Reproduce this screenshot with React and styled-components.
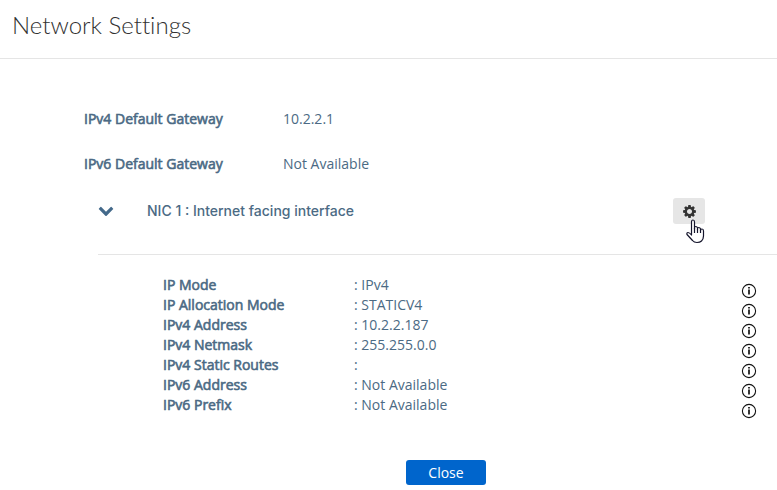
import { useState } from "react";
import styled, { createGlobalStyle } from "styled-components";

const GlobalStyle = createGlobalStyle`
  * {
    box-sizing: border-box;
  }

  body {
    margin: 0;
    background: #fff;
    color: #4b6a84;
    font-family: "Open Sans", "Noto Sans", sans-serif;
    font-size: 14px;
    line-height: 20px;
  }

  button {
    border: 0;
    font: inherit;
    cursor: pointer;
  }
`;

const Header = styled.header`
  padding: 9px 12px 17px;
  border-bottom: 1px solid #e5e5e5;

  h1 {
    margin: 0;
    color: #313131;
    font-family: Lato, sans-serif;
    font-size: 24px;
    font-weight: 300;
    font-variant-ligatures: none;
    line-height: 32px;
  }
`;

const Gateways = styled.dl`
  display: grid;
  grid-template-columns: 199px 1fr;
  row-gap: 25px;
  margin: 0;
  padding: 50px 0 0 84px;
`;

const Label = styled.dt`
  -webkit-text-stroke: 0.6px currentColor;
`;

const Value = styled.dd`
  margin: 0;
`;

const Panel = styled.section`
  margin-left: 98px;
`;

const PanelHeader = styled.div`
  display: flex;
  align-items: center;
  padding: 24px 72px 30px 0;
  border-bottom: 1px solid #e5e5e5;

  h2 {
    flex: 1;
    margin: 0;
    font-family: Inter, sans-serif;
    font-size: 14px;
    font-weight: 500;
    line-height: 20px;
  }
`;

const Toggle = styled.button`
  display: flex;
  width: 49px;
  padding: 0;
  background: none;
  color: #43698a;

  svg {
    transform: ${(props) => (props.$open ? "none" : "rotate(-90deg)")};
  }
`;

const GearButton = styled.button`
  position: relative;
  display: flex;
  align-items: center;
  justify-content: center;
  width: 32px;
  height: 26px;
  padding: 0;
  border-radius: 3px;
  background: #e6e6e6;
  color: #333;
`;

const Pointer = styled.svg`
  position: absolute;
  top: 21px;
  left: 13px;
  pointer-events: none;
`;

const Details = styled.div`
  display: flex;
  justify-content: space-between;
  padding: 20px 20px 0 65px;
`;

const DetailList = styled.dl`
  display: grid;
  grid-template-columns: 191px auto;
  grid-auto-rows: 20px;
  margin: 0;
`;

const InfoColumn = styled.div`
  display: grid;
  grid-auto-rows: 20px;
  padding-top: 6px;
`;

const InfoButton = styled.button`
  display: flex;
  align-items: center;
  padding: 0;
  background: none;
  color: #111;
`;

const Footer = styled.footer`
  display: flex;
  justify-content: center;
  padding: 39px 0 4px 115px;
`;

const CloseButton = styled.button`
  width: 80px;
  height: 25px;
  padding: 0;
  border-radius: 3px;
  background: #0065cc;
  color: #fff;
`;

const gateways = [
  { label: "IPv4 Default Gateway", value: "10.2.2.1" },
  { label: "IPv6 Default Gateway", value: "Not Available" },
];

const details = [
  { label: "IP Mode", value: "IPv4" },
  { label: "IP Allocation Mode", value: "STATICV4" },
  { label: "IPv4 Address", value: "10.2.2.187" },
  { label: "IPv4 Netmask", value: "255.255.0.0" },
  { label: "IPv4 Static Routes", value: "" },
  { label: "IPv6 Address", value: "Not Available" },
  { label: "IPv6 Prefix", value: "Not Available" },
];

const ChevronIcon = () => (
  <svg width="16" height="16" viewBox="0 100 1792 1792" fill="currentColor">
    <path d="M1683 808l-742 741q-19 19-45 19t-45-19l-742-741q-19-19-19-45.500t19-45.500l166-165q19-19 45-19t45 19l531 531 531-531q19-19 45-19t45 19l166 165q19 19 19 45.500t-19 45.500z" />
  </svg>
);

const GearIcon = () => (
  <svg width="15" height="15" viewBox="0 0 1792 1792" fill="currentColor">
    <path d="M1196 896q0-124-88-212t-212-88-212 88-88 212 88 212 212 88 212-88 88-212zm468-109v222q0 12-8 23t-20 13l-185 28q-19 54-39 91 35 50 107 138 10 12 10 25t-9 23q-27 37-99 108t-94 71q-12 0-26-9l-138-108q-44 23-91 38-16 136-29 186-7 28-36 28h-222q-14 0-24.500-8.500t-11.500-21.500l-28-184q-49-16-90-37l-141 107q-10 9-25 9-14 0-25-11-126-114-165-168-7-10-7-23 0-12 8-23 15-21 51-66.500t54-70.500q-27-50-41-99l-183-27q-13-2-21-12.500t-8-23.500v-222q0-12 8-23t19-13l186-28q14-46 39-92-40-57-107-138-10-12-10-24 0-10 9-23 26-36 98.500-107.500t94.500-71.500q13 0 26 10l138 107q44-23 91-38 16-136 29-186 7-28 36-28h222q14 0 24.500 8.500t11.500 21.500l28 184q49 16 90 37l142-107q9-9 24-9 13 0 25 10 129 119 165 170 7 8 7 22 0 12-8 23-15 21-51 66.500t-54 70.500q26 50 41 98l183 28q13 2 21 12.500t8 23.500z" />
  </svg>
);

const InfoIcon = () => (
  <svg width="16" height="16" viewBox="0 0 16 16" fill="none" stroke="currentColor">
    <circle cx="8" cy="8" r="6.600" strokeWidth="1.100" />
    <path d="M8 6.600v5M8 4v1.600" strokeWidth="1.700" />
  </svg>
);

const HandPointer = () => (
  <Pointer width="19" height="25" viewBox="0 0 19 25" aria-hidden="true">
    <path
      d="M5.500 16V3Q5.500 1 7 1T8.500 3V10V8.500Q8.500 7.500 9.800 7.500T11.500 9V10.500V9.500Q11.500 8.500 12.800 8.500T14.500 10V11.500Q14.500 10 16 10T17.500 12V17Q17.500 20 15.500 22Q14 23.500 11 23.500Q8 23.500 6.500 21.500L1 15.500Q0.500 13.500 2 13.500Q3.500 13.500 5.500 16Z"
      fill="#fff"
      stroke="#14142b"
      strokeWidth="1.200"
      strokeLinejoin="round"
    />
    <path d="M8.500 9v5M11.500 10v4M14.500 11v3" stroke="#14142b" strokeWidth="1.200" />
  </Pointer>
);

const App = () => {
  const [open, setOpen] = useState(true);

  return (
    <>
      <GlobalStyle />
      <Header>
        <h1>Network Settings</h1>
      </Header>
      <main>
        <Gateways>
          {gateways.map((item) => [
            <Label key={item.label}>{item.label}</Label>,
            <Value key={item.label + "-value"}>{item.value}</Value>,
          ])}
        </Gateways>
        <Panel>
          <PanelHeader>
            <Toggle
              type="button"
              $open={open}
              aria-expanded={open}
              aria-label="Toggle NIC 1"
              onClick={() => setOpen(!open)}
            >
              <ChevronIcon />
            </Toggle>
            <h2>NIC 1 : Internet facing interface</h2>
            <GearButton type="button" aria-label="Edit NIC 1">
              <GearIcon />
              <HandPointer />
            </GearButton>
          </PanelHeader>
          {open && (
            <Details>
              <DetailList>
                {details.map((item) => [
                  <Label key={item.label}>{item.label}</Label>,
                  <Value key={item.label + "-value"}>: {item.value}</Value>,
                ])}
              </DetailList>
              <InfoColumn>
                {details.map((item) => (
                  <InfoButton
                    key={item.label}
                    type="button"
                    aria-label={"About " + item.label}
                  >
                    <InfoIcon />
                  </InfoButton>
                ))}
              </InfoColumn>
            </Details>
          )}
        </Panel>
      </main>
      <Footer>
        <CloseButton type="button">Close</CloseButton>
      </Footer>
    </>
  );
};

export default App;
